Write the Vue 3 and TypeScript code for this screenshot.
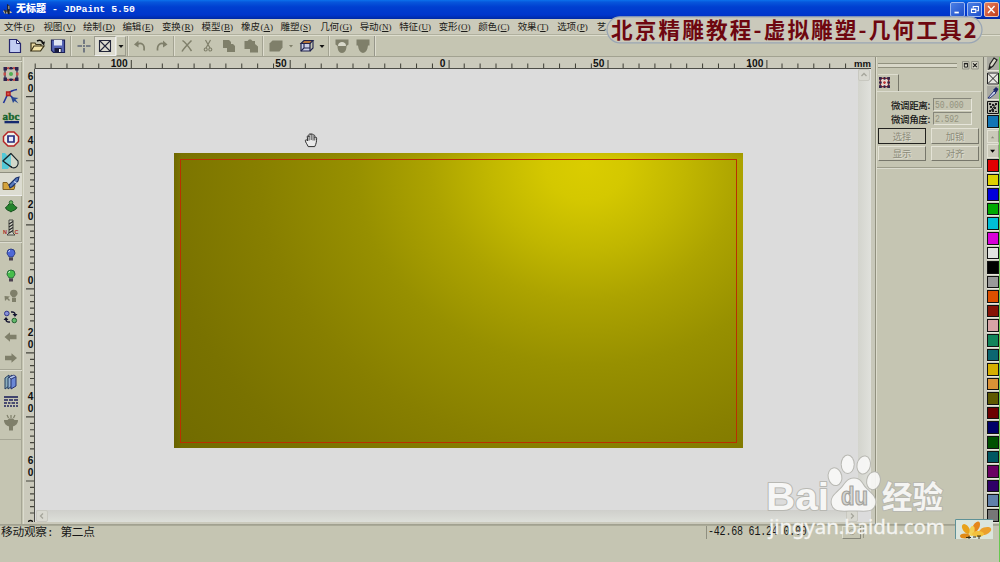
<script setup lang="ts">
interface Shape { d: string; f?: string; s?: string; w?: number }
interface Icon { w?: number; kind?: string; label?: string; shapes: Shape[] }

const G = '#7f7f6a'
const caret: Shape[] = [{ d: 'M-2.5-1h5L0 2z', f: '#111' }]

const menus: [string, string][] = [
  ['文件', 'F'], ['视图', 'V'], ['绘制', 'D'], ['编辑', 'E'], ['变换', 'R'], ['模型', 'B'],
  ['橡皮', 'A'], ['雕塑', 'S'], ['几何', 'G'], ['导动', 'N'], ['特征', 'U'], ['变形', 'O'],
  ['颜色', 'C'], ['效果', 'T'], ['选项', 'P'], ['艺', ''],
]

const toolbar: Icon[] = [
  { w: 22, shapes: [{ d: 'M-5.5-6.5h7l4 4v9h-11z', f: '#c3cdf2', s: '#26276e', w: 1.2 }, { d: 'M1.5-6.5v4h4z', f: '#f2f4ff', s: '#26276e' }] },
  { w: 21, shapes: [{ d: 'M-6 5V-3h4l1 1.5h5V1', f: '#e9d8a0', s: '#3a3217', w: 1.2 }, { d: 'M-6 5l3-5H7L3.500 5z', f: '#f3e3a8', s: '#3a3217', w: 1.2 }, { d: 'M0-5c3-1.500 5-.5 6 2', s: '#111', w: 1.4 }, { d: 'M4-3.500l4-1-1 4z', f: '#111' }] },
  { w: 22, shapes: [{ d: 'M-6.500-6h13V6.500h-11l-2-2z', f: '#5665b5', s: '#1c2058', w: 1.2 }, { d: 'M-4-6h8v5.500h-8z', f: '#dfe5f2' }, { d: 'M-3.500 2h7v4.500h-7z', f: '#191b3d' }, { d: 'M1 3h1.700v3H1z', f: '#fff' }] },
  { kind: 'sep', w: 4, shapes: [] },
  { w: 21, shapes: [{ d: 'M0-6.500V-2M0 2v4.500M-6.500 0H-2M2 0h4.500', s: '#2e3a5c', w: 1.1 }, { d: 'M-.7-.7h1.400v1.400h-1.400z', f: '#2e3a5c' }] },
  { kind: 'pressed', w: 22, shapes: [{ d: 'M-5.500-5.500h11v11h-11zM-5.500-5.500l11 11M5.500-5.500l-11 11', s: '#22263a', w: 1.1 }] },
  { kind: 'raised', w: 10, shapes: caret },
  { kind: 'sep', w: 3, shapes: [] },
  { w: 22, shapes: [{ d: 'M-3-1.500c4-2.500 8-.5 7 6', s: G, w: 1.7 }, { d: 'M-6-1.500l4.500-4v7z', f: G }] },
  { w: 21, shapes: [{ d: 'M3-1.500c-4-2.500-8-.5-7.500 6', s: G, w: 1.7 }, { d: 'M5.500-1.500l-4.500-4v7z', f: G }] },
  { kind: 'sep', w: 4, shapes: [] },
  { w: 21, shapes: [{ d: 'M-4.500-5.500c3 2 6 6 9 10.500M4.500-5.500C1-2-3 2-5 5.500', s: G, w: 1.5 }] },
  { w: 21, shapes: [{ d: 'M-2.500-6L2 2M2.500-6L-2 2', s: G, w: 1.2 }, { d: 'M-3.800 3.500a1.500 1.500 0 1 0 3 0a1.500 1.500 0 1 0-3 0M.8 3.500a1.500 1.500 0 1 0 3 0a1.500 1.500 0 1 0-3 0', s: G, w: 1.1 }] },
  { w: 22, shapes: [{ d: 'M-6-6H0l2 2v2h2l2 2v6h-8V2h-4z', f: G }] },
  { w: 21, shapes: [{ d: 'M-6.500-5h3l1.500-1.500h2L1.500-5H4v3l3 2.500V6.500h-8V3h-5.500z', f: G }] },
  { kind: 'sep', w: 4, shapes: [] },
  { w: 21, shapes: [{ d: 'M-6.500-2.500l3-3h10v7l-3 4h-10z', f: G }] },
  { w: 10, shapes: [{ d: 'M-2-1h4L0 1.500z', f: G }] },
  { w: 21, shapes: [{ d: 'M-6-2.500l3-3H6l-3 3z', f: '#b5743b', s: '#20234e', w: 1.1 }, { d: 'M-6-2.500h9v7.500h-9z', f: '#c9cde6', s: '#20234e', w: 1.2 }, { d: 'M6-5.500V2L3 5M-3-2.500V2L-6 5M-3 2h6', s: '#20234e', w: 1.1 }] },
  { w: 10, shapes: caret },
  { kind: 'sep', w: 4, shapes: [] },
  { w: 21, shapes: [{ d: 'M-6.500-6.500h13v5l-2 1.500c0 4-1.500 7-4.500 7S-4.500 4-4.500 0l-2-1.500z', f: G }, { d: 'M-4 0c0-3 2-4 4-4s4 1 4 4z', f: '#d8d8ca' }] },
  { w: 22, shapes: [{ d: 'M-6.500-6.500h13v6H5C4.500 4 3 6.500 0 7c-3-.5-4.500-3-5-7.500h-1.500z', f: G }] },
  { kind: 'end', w: 3, shapes: [] },
]

const bulb = (c: string, dark: string): Shape[] => [
  { d: 'M-4-2a4 4 0 1 1 8 0c0 2-2 2.500-2 4h-4c0-1.500-2-2-2-4z', f: c, s: dark, w: 0.9 },
  { d: 'M-2 2.500h4v3h-4z', f: '#4b4150' }, { d: 'M-2.500-3.500l1.500-1', s: '#fff', w: 1 },
]

const toolGroups: { cls: string; icons: Icon[] }[] = [
  { cls: 'g1', icons: [
    { shapes: [{ d: 'M-6-5.500H6v11H-6z', s: '#22264f', w: 1.2 }, { d: 'M-7.500-7h3.500v3.500h-3.500zM4-7h3.500v3.500H4zM-7.500 3.500h3.500V7h-3.500zM4 3.500h3.500V7H4zM-1.500-7h3v2.500h-3zM-1.500 4.500h3V7h-3z', f: '#2d2350' }, { d: 'M-7.500-1.500h2.500v3h-2.500zM5-1.500h2.500v3H5zM-3.800-7h2v2.200h-2zM2-7h2v2.200H2zM-3.800 4.800h2V7h-2zM2 4.800h2V7H2z', f: '#c24f4a' }, { d: 'M-2 0a2 2 0 1 0 4 0a2 2 0 1 0-4 0', f: '#51b052' }] },
    { shapes: [{ d: 'M-7.500 7L-3-2.500M-3-2.500C0-5.500 3-6 6-6.500M-3-2.500L2 2', s: '#20339a', w: 1.6 }, { d: 'M-4.500-4h3.500v3.500h-3.500z', f: '#d5594d', s: '#b41d1d', w: 1.3 }, { d: 'M0 1l7.500 1-3 1.500 3 4-4-2.500L2 7z', f: '#294893' }] },
    { label: 'abc', shapes: [{ d: 'M-6.500 4H8V6.300H-6.500z', f: '#15296f' }] },
    { shapes: [{ d: 'M-3-7h6l4.500 4.500v5L3 7h-6l-4.500-4.500v-5z', f: '#edf0e8', s: '#b42325', w: 1.5 }, { d: 'M-3-3h6v6h-6z', f: '#e9ebff', s: '#252b7e', w: 1.7 }] },
    { shapes: [{ d: 'M-9-8h3l7 8-4 8h-6z', f: '#52c8d7' }, { d: 'M-8 0L0-7.500 7 0C8 4 5 8 1 6.500z', f: '#d2d8ca', s: '#182329', w: 1.1 }, { d: 'M-8 0L0-7.500V6z', f: '#6fcdd6' }, { d: 'M-8 0L0-7.500M-8 0L1 6.500', s: '#182329', w: 1.1 }] },
    { kind: 'pressed', shapes: [{ d: 'M-8-1.500h4L-1 3l5-1.500-1 4h-11z', f: '#d5a33b', s: '#805f21' }, { d: 'M-2 1l7-7 3-1-1 4-5.500 5.500L-1 4z', f: '#597bbd', s: '#1d326b', w: 1.1 }, { d: 'M3-2.500l3 2', s: '#cdd9f2', w: 1.2 }] },
    { shapes: [{ d: 'M-5.500 1.500c3-1 2-4 5.500-4.500C3.500-2.500 2.500.5 6 1.500 5 4.500 1 4.500 0 6-1.500 4.500-5 4.500-5.500 1.500z', f: '#24842c', s: '#174f1d' }, { d: 'M-1.800-3.500a1.800 1.800 0 1 1 3.600 0a1.800 1.800 0 1 1-3.600 0', f: '#67b95d', s: '#2b6831' }] },
    { label: 'drill', shapes: [{ d: 'M-2-8h4V5l2 2h-8l2-2z', f: '#d2d3c6', s: '#383a37', w: 0.9 }, { d: 'M-2-4l4-2.500M-2-1l4-2.500M-2 2l4-2.500M-2 5l4-2.500', s: '#252525', w: 1.2 }] },
  ] },
  { cls: 'g2', icons: [
    { shapes: bulb('#4e68d6', '#26367b') },
    { shapes: bulb('#46bd4b', '#236336') },
    { shapes: [{ d: 'M-1-2.500a3.800 3.800 0 1 1 7.600 0c0 2-2.300 2.500-2.300 4h-3c0-1.500-2.300-2-2.300-4zM1 2h4v4H1z', f: G }, { d: 'M-6.500 0l5.500.5-2 1.500 2 2-1 1-2-2L-6 5z', f: G }] },
    { shapes: [{ d: 'M-6.500-3.500a2.300 2.300 0 1 0 4.600 0a2.300 2.300 0 1 0-4.600 0', f: '#8790d8', s: '#30368a' }, { d: 'M1 3.500a2.300 2.300 0 1 0 4.600 0a2.300 2.300 0 1 0-4.600 0', f: '#62b96a', s: '#256032' }, { d: 'M0-5c3-.5 4 1 4 2.500M-1 5c-3 .5-4-1-4-2.500', s: '#151530', w: 1.5 }, { d: 'M1.500-3h5L4 0zM-7.500 3h5L-5 0z', f: '#151530' }] },
    { shapes: [{ d: 'M-6.500 0l5.500-4.800v2.500h6.500v4.600H-1v2.500z', f: G }] },
    { shapes: [{ d: 'M6 0L.5-4.800v2.500H-6v4.600H.5v2.500z', f: G }] },
  ] },
  { cls: 'g3', icons: [
    { shapes: [{ d: 'M-6-4l4-3v11l-4 3z', f: '#8caebb', s: '#233c60' }, { d: 'M-3-4l4-3v11l-4 3z', f: '#96b4d2', s: '#233c60' }, { d: 'M0-3l5-2.500V4L0 7z', f: '#6b88d6', s: '#25306f' }, { d: 'M0-3L-2-5l5-2 2 1.500z', f: '#b7caf0', s: '#25306f', w: 0.8 }] },
    { shapes: [{ d: 'M-7-5H7', s: '#20235c', w: 1.6 }, { d: 'M-7-2h4m1 0h4m1 0h4M-7 1h3m1 0h2.500m1 0H4m1 0h2M-7 4h2m1 0h2m1 0h2m1 0h2m1 0h2', s: '#20235c', w: 1.5 }] },
    { shapes: [{ d: 'M-7-3h3.500L-2-4.500h4L3.500-3H7c0 4-2.500 5.500-5 6.500v4h-4v-4C-4.500 2.500-7 1-7-3z', f: G }, { d: 'M-4-8l1.500 3M0-8v3M4-8L2.500-5', s: G, w: 1.2 }] },
  ] },
]

const majorX = [-1, 0, 1, 2, 3].map((i) => 289.6 + i * 158.9)
const labelsX = ['100', '50', '0', '50', '100']
const minorX = Array.from({ length: 52 }, (_, i) => 35.2 + i * 15.89)
  .filter((x) => x < 848 && majorX.every((m) => Math.abs(m - x) > 3) && Math.abs(x - 114.6) > 2)
const majorY = [0, 1, 2, 3, 4, 5, 6].map((i) => 96.7 + i * 64.05)
const labelsY = ['60', '40', '20', '0', '20', '40', '60']
const minorY = majorY.flatMap((m, i) =>
  Array.from({ length: i === 2 ? 7 : 5 }, (_, k) => m + (k + 1) * 6.4))

const colors = [
  '#e00000', '#ddd000', '#0000dc', '#00a900', '#00bfd6', '#d800d8', '#e2e4e0', '#000000', '#999999',
  '#dc5000', '#861407', '#d8a4a6', '#12845a', '#0c6670', '#d5ae00', '#da9236', '#5e5900', '#6c0000',
  '#000068', '#005000', '#005762', '#6a0062', '#2f0067', '#6080aa', '#777777',
]
</script>

<template>
  <div class="app">
    <header class="title">
      <svg class="logo" viewBox="0 0 14 16"><path d="M1 9h8l3 2-4 1H3z" fill="#d9c895" /><path d="M6 1l3 2v10H7l-1-3z" fill="#1c1c22" /><path d="M2 7l4 2-2 4" fill="#292a34" /><path d="M8 3v4" stroke="#ded7b8" /></svg>
      <span class="caption"><b>无标题</b> - JDPaint 5.50</span>
      <div class="winbtns">
        <i><svg viewBox="0 0 15 15"><path d="M4 11h5" stroke="#fff" stroke-width="2" /></svg></i>
        <i><svg viewBox="0 0 15 15"><path d="M6 6V4h6v5h-2M4 7h5v4H4zM4 7.500h5" fill="none" stroke="#fff" stroke-width="1.200" /></svg></i>
        <i class="close"><svg viewBox="0 0 15 15"><path d="M3.500 3.500l7.500 8M11 3.500l-7.500 8" stroke="#fff" stroke-width="1.600" /></svg></i>
      </div>
    </header>

    <nav class="menu">
      <span v-for="m in menus" :key="m[0]" class="mi">{{ m[0] }}<em v-if="m[1]">(<u>{{ m[1] }}</u>)</em></span>
    </nav>

    <div class="toolbar">
      <div v-for="(t, i) in toolbar" :key="i" class="tb" :class="t.kind" :style="{ width: t.w + 'px' }">
        <svg v-if="t.shapes.length" viewBox="-10 -10 20 20"><path v-for="(p, k) in t.shapes" :key="k" :d="p.d" :fill="p.f || 'none'" :stroke="p.s || 'none'" :stroke-width="p.w || 1" /></svg>
      </div>
    </div>

    <main class="body">
      <aside class="tools">
        <div v-for="g in toolGroups" :key="g.cls" class="group" :class="g.cls">
          <div v-for="(t, i) in g.icons" :key="i" class="tool" :class="t.kind">
            <svg viewBox="-10 -10 20 20">
              <path v-for="(p, k) in t.shapes" :key="k" :d="p.d" :fill="p.f || 'none'" :stroke="p.s || 'none'" :stroke-width="p.w || 1" />
              <text v-if="t.label === 'abc'" x="-8.500" y="3" textLength="17" class="abc">abc</text>
              <template v-if="t.label === 'drill'"><text x="-8" y="6" class="nc">N</text><text x="3.500" y="6" class="nc">C</text></template>
            </svg>
          </div>
        </div>
      </aside>

      <section class="work">
        <svg class="hruler" viewBox="24 57 851 12">
          <path :d="minorX.map((x) => `M${x} 63.500V68`).join('') + majorX.map((x) => `M${x + 0.6} 60V68`).join('')" stroke="#3c3c34" stroke-width="1" />
          <path d="M34.500 68.500H871" stroke="#4d4d48" />
          <text v-for="(l, i) in labelsX" :key="i" :x="majorX[i] - 3" y="66.800" text-anchor="end" class="num">{{ l }}</text>
          <text x="871" y="66.500" text-anchor="end" class="num mm">mm</text>
        </svg>
        <svg class="vruler" viewBox="24 69 11 455">
          <path :d="minorY.map((y) => `M30 ${y}H34`).join('') + majorY.map((y) => `M26 ${y}H34`).join('')" stroke="#44443c" stroke-width="1.200" />
          <path d="M34.500 69V522" stroke="#4d4d48" />
          <template v-for="(l, i) in labelsY" :key="i">
            <text v-for="(c, k) in l" :key="k" x="27.800" :y="majorY[i] - (l.length - Number(k)) * 12 + 6.900" class="num">{{ c }}</text>
          </template>
          <path d="M28.500 522c0-2 4-2 4 0" fill="none" stroke="#111" stroke-width="1.300" />
        </svg>
        <div class="canvas">
          <div class="sheet"><div class="frame"></div></div>
          <svg class="hand" viewBox="0 0 14 16"><path d="M4 14.500C3 12 1 10 1 8c0-1 1.500-1.200 2.500.5L3 4c0-1.500 1.500-1.500 1.800 0V2.500C5-0 7 .3 7 2c0-1.700 2-1.700 2.200.5C9.500 1.500 11 1.800 11 3.500V5c.5-1 2-.8 2 .5 0 4-.5 6-2 9z" fill="#eaeaea" stroke="#222" stroke-width="1" /><path d="M5 3v5M7.200 2v5.500M9.200 3v5M11 4.500V8" stroke="#333" stroke-width=".9" /></svg>
          <div class="vscroll"><i class="sb"><svg viewBox="0 0 10 10"><path d="M2.500 6L5 3.500 7.500 6" /></svg></i><i class="sb"><svg viewBox="0 0 10 10"><path d="M2.500 4L5 6.500 7.500 4" /></svg></i></div>
          <div class="hscroll"><i class="sb"><svg viewBox="0 0 10 10"><path d="M6 2.500L3.500 5 6 7.500" /></svg></i><i class="sb"><svg viewBox="0 0 10 10"><path d="M4 2.500L6.500 5 4 7.500" /></svg></i></div>
        </div>
      </section>

      <aside class="panel">
        <div class="ptitle"><span class="grip"></span><svg viewBox="0 0 18 9"><path d="M.5.500h7v8h-7zM10.500.500h7v8h-7z" fill="#d8d7c8" stroke="#8a8a7e" /><path d="M2.500 3h3.500v3.500H2.500zM2 2.500h4.500" fill="none" stroke="#111" /><path d="M12 2.500l4 4M16 2.500l-4 4" stroke="#111" stroke-width="1.200" /></svg></div>
        <div class="tabrow"><div class="tab"><svg viewBox="0 0 12 12"><path d="M1.500 1.500h9v9h-9z" fill="#e7d8cf" stroke="#8a2330" stroke-width="1.500" /><path d="M0 0h3v3H0zM9 0h3v3H9zM0 9h3v3H0zM9 9h3v3H9zM5 0h2v3H5zM5 9h2v3H5zM0 5h3v2H0zM9 5h3v2H9z" fill="#352649" /><path d="M4.500 6h3M6 4.500v3" stroke="#bd3434" stroke-width="1.400" /></svg></div></div>
        <div class="form">
          <div class="row"><label>微调距离:</label><span class="field"><span>50.000</span></span></div>
          <div class="row"><label>微调角度:</label><span class="field"><span>2.592</span></span></div>
          <div class="btns"><button class="def">选择</button><button>加锁</button><button>显示</button><button>对齐</button></div>
        </div>
      </aside>

      <aside class="palette">
        <div class="pc icon"><svg viewBox="0 0 12 13"><path d="M2 12l1-5 4-6 3 2-4 6z" fill="#d8d8c8" stroke="#222" stroke-width="1.200" /><path d="M2 12l1-3 1.500 1z" fill="#111" /></svg></div>
        <div class="pc white"><svg viewBox="0 0 12 13"><path d="M.5 1h11v11H.5zM1 1.500l10 10M11 1.500l-10 10" fill="none" stroke="#222" /></svg></div>
        <div class="pc icon"><svg viewBox="0 0 12 13"><path d="M1 12l6-7 2 2-6 5z" fill="#cfd6ee" stroke="#27347c" /><path d="M6 4l3-3 2.500 2-2 3.500z" fill="#1d2868" /></svg></div>
        <div class="pc icon"><svg viewBox="0 0 12 13"><path d="M.5.500h11v12H.5z" fill="#b4b4a8" stroke="#111" /><path d="M2 2h2v2H2zM5 3h2v2H5zM8 2h2v2H8zM3 5h2v2H3zM7 6h2v2H7zM2 9h2v2H2zM5 8h2v3H5zM8 10h2v1H8z" fill="#222" /><path d="M3 11l6-8" stroke="#111" /></svg></div>
        <div class="pc"><i class="sw current"></i></div>
        <div class="pc arrow"><svg viewBox="0 0 12 13"><path d="M3.500 7.500h4L5.500 5z" fill="#888878" /></svg></div>
        <div class="pc arrow"><svg viewBox="0 0 12 13"><path d="M2.500 4.500h6L5.500 8z" fill="#000" /></svg></div>
        <div v-for="(c, i) in colors" :key="i" class="pc"><i class="sw" :style="{ background: c }"></i></div>
      </aside>
    </main>

    <footer class="status">
      <span class="hint">移动观察: 第二点</span>
      <span class="coords"><span>-42.68 61.24 0.00</span></span>
      <span class="slot"><svg viewBox="0 0 18 14"><circle cx="9" cy="6" r="3" fill="none" stroke="#98988a" /></svg></span>
      <span class="slotend"></span>
    </footer>

    <svg class="banner" viewBox="0 0 378 28"><rect x="1" y=".8" width="375" height="26" rx="13" fill="#cac9bb" stroke="#9aa6b4" stroke-width="1.300" /><text x="5" y="21.800" textLength="365.5">北京精雕教程-虚拟雕塑-几何工具2</text></svg>

    <svg class="flower" viewBox="0 0 38 20"><rect width="38" height="20" fill="#dbe5dc" /><path d="M.5 20V.5H38" fill="none" stroke="#5f9297" /><g fill="#e8a11a"><ellipse cx="11" cy="10" rx="3.200" ry="5.500" transform="rotate(-35 11 10)" /><ellipse cx="21" cy="8" rx="3.200" ry="6" transform="rotate(30 21 8)" fill="#e5861a" /><ellipse cx="17" cy="12" rx="2.500" ry="5" transform="rotate(10 17 12)" fill="#f3d054" /><ellipse cx="30" cy="12" rx="6.500" ry="3.600" transform="rotate(-20 30 12)" fill="#eba02c" /><ellipse cx="10" cy="17" rx="5" ry="2.500" fill="#e08a18" /><ellipse cx="23" cy="15" rx="6" ry="3" fill="#f3c13c" /></g><path d="M11 18.500h5m-2-1.500v3m4-2h3m1-1h4m-2 0v3" fill="none" stroke="#383019" /></svg>

    <svg class="mark" viewBox="760 450 200 95">
      <g class="shade">
        <text x="766" y="510" textLength="63" lengthAdjust="spacingAndGlyphs" class="bai">Bai</text>
        <ellipse cx="835" cy="476.700" rx="6.300" ry="8.400" transform="rotate(-12 835 476.700)" /><ellipse cx="847.700" cy="464.300" rx="6" ry="8.700" /><ellipse cx="863.700" cy="465" rx="6.200" ry="8.600" transform="rotate(12 863.700 465)" /><ellipse cx="873.500" cy="480.700" rx="6.300" ry="8.600" transform="rotate(12 873.500 480.700)" />
        <path d="M854 478.500c7 0 8 6 12 10 5 5 11 9 9 16-2 8-11 6-21 6s-20 2-22-6c-2-7 4-11 9-16 4-4 6-10 13-10z" />
        <text x="882" y="507.500" textLength="61" class="jy">经验</text>
      </g>
      <text x="841" y="505" textLength="27" lengthAdjust="spacingAndGlyphs" class="du">du</text>
      <text x="769" y="534" textLength="176" class="url">jingyan.baidu.com</text>
    </svg>
    <div class="edge"></div>
  </div>
</template>

<style>
html, body { margin: 0; overflow: hidden; background: #c5c5b2; }
</style>

<style scoped>
* { box-sizing: border-box; }
.app { position: relative; width: 1000px; height: 562px; overflow: hidden; background: #c5c5b2; color: #151515; font-family: "Liberation Sans", "Noto Sans CJK SC", sans-serif; display: flex; flex-direction: column; }
svg { display: block; }
.title { height: 19px; flex: none; display: flex; align-items: center; background: linear-gradient(#0c72ec 0, #0757dc 2px, #003fd0 7px, #0036cc 15px, #0029a4 19px); color: #fff; padding-left: 2px; }
.logo { width: 12px; height: 14px; margin-right: 2px; }
.caption { font: bold 9.9px "Liberation Mono", "Noto Sans CJK SC", monospace; white-space: pre; line-height: 18px; flex: 1; }
.caption b { font-size: 10px; }
.winbtns { display: flex; gap: 2px; padding-right: 1px; }
.winbtns i { width: 15px; height: 15px; border: 1px solid #9fb8f0; border-radius: 2px; background: linear-gradient(135deg, #4b7fe5, #1e4fc9); }
.winbtns .close { background: linear-gradient(135deg, #e4805f, #c43d1a); border-color: #e8c2b4; }
.winbtns svg { width: 13px; height: 13px; }
.menu { height: 15.5px; flex: none; display: flex; padding-left: 4px; background: #cbcaba; border-bottom: 1px solid #b0b09e; }
.mi { width: 39.53px; flex: none; white-space: nowrap; font: 9.5px/15px "Noto Sans CJK SC", sans-serif; color: #1b1b18; letter-spacing: -.2px; }
.mi:last-child { width: 9px; }
.mi em { font: 9px "Liberation Serif", serif; font-style: normal; margin-left: .8px; letter-spacing: 0; }
.mi u { text-decoration-thickness: .6px; text-underline-offset: 1px; }
.toolbar { height: 22.5px; flex: none; display: flex; align-items: stretch; padding-left: 4px; border-top: 1px solid #dedecf; border-bottom: 1px solid #a2a291; }
.tb { flex: none; display: flex; align-items: center; justify-content: center; }
.tb svg, .tool svg { width: 20px; height: 20px; flex: none; overflow: visible; }
.sep { background: linear-gradient(90deg, transparent 1px, #a3a392 1px, #a3a392 2px, #deddcf 2px, #deddcf 3px, transparent 3px); }
.end { border-left: 1px solid #96968a; box-shadow: inset 1px 0 #deddcf; }
.tb.pressed { background: #dddcd0; border: 1px solid #9b9b8c; border-right-color: #eee; border-bottom-color: #eee; }
.tb.raised { border: 1px solid #dfdfd2; border-right-color: #9b9b8c; border-bottom-color: #9b9b8c; }
.body { height: 467px; flex: none; display: grid; grid-template-columns: 24px 851px 109px 15px; }
.tools { display: flex; flex-direction: column; padding-top: 3px; border-right: 1px solid #dcdccf; background: linear-gradient(90deg, transparent 21px, #a6a695 21px, #a6a695 22px, transparent 22px); }
.group { border-top: 1px solid #a6a695; box-shadow: inset 0 1px #dcdccf; width: 22px; display: grid; padding-top: 2px; }
.g1 { height: 181px; padding-bottom: 2px; }
.g2 { height: 128px; padding-top: 3px; padding-bottom: 1px; }
.g3 { height: 71px; padding-bottom: 6px; border-bottom: 1px solid #a6a695; }
.tool { display: flex; align-items: center; justify-content: center; }
.tool.pressed { background: #dcdcd1; border-top: 1px solid #8f8f80; border-bottom: 1px solid #eee; }
.abc { font: bold 11px "Liberation Serif", serif; fill: #14642c; stroke: #14642c; stroke-width: .4; }
.nc { font: bold 5.5px "Liberation Sans", sans-serif; fill: #a8302b; }
.work { display: grid; grid-template: 12px 455px / 11px 840px; background: #cbcabc; }
.hruler { grid-column: 1 / 3; width: 851px; height: 12px; }
.vruler { width: 11px; height: 455px; }
.num { font: bold 10.2px "Liberation Sans", sans-serif; fill: #111; }
.mm { font-size: 9.5px; }
.canvas { position: relative; background: #dcdcdc; border-right: 4px solid #c8c8ba; height: 453px; }
.sheet { position: absolute; left: 139px; top: 84px; width: 569px; height: 295px; padding: 6px 6px 5px 6px; background: linear-gradient(90deg, rgba(70, 65, 0, .22) 0, transparent 7px), linear-gradient(rgba(80, 75, 0, .1) 0, transparent 7px), radial-gradient(575px 500px at 412px 12px, #dacd00 0, #d4c800 7%, #c1b700 17%, #aca300 27%, #979000 40%, #877f00 57%, #797200 75%, #6c6700 100%); }
.frame { height: 100%; border: 1px solid #ba3000; }
.hand { position: absolute; left: 269px; top: 64px; width: 14px; height: 15px; }
.vscroll, .hscroll { position: absolute; display: flex; justify-content: space-between; }
.vscroll { right: 0; top: 0; width: 13px; height: 440px; flex-direction: column; background: linear-gradient(90deg, #d3d4cd, #e0e1dc); }
.hscroll { left: 1px; bottom: 0; width: 822px; height: 12px; background: linear-gradient(#cfcfcb, #dddfd9); }
.sb { width: 12px; height: 12px; background: #d8d8d0; border: 1px solid #c8c8c0; border-radius: 2px; }
.sb svg { width: 10px; height: 10px; }
.sb path { fill: none; stroke: #a5a59b; stroke-width: 1.3; }
.panel { border-left: 1px solid #91917f; box-shadow: inset 1px 0 #dddccd; border-right: 1px solid #7c7c70; }
.ptitle { display: flex; align-items: center; padding: 4px 4px 0 2px; gap: 5px; height: 13px; }
.grip { width: 81px; height: 5px; border-top: 1px solid #91917f; border-bottom: 1px solid #91917f; background: #d8d7c8; }
.ptitle svg { width: 17px; height: 8.5px; }
.tabrow { height: 21px; padding: 4px 5px 0 2px; }
.tab { width: 21px; height: 18px; border-right: 1px solid #77776a; border-top: 1px solid #dedecf; padding: 2px 0 0 1px; }
.tab svg { width: 11px; height: 11px; }
.form { margin: 0 1px 0 1px; height: 77px; padding-top: 6px; border-top: 1px solid #dcdccf; border-right: 1px solid #8f8f80; border-bottom: 1px solid #9d9d8b; box-shadow: 0 1px #dcdccf; }
.row { display: flex; height: 14px; padding-left: 14px; }
label { width: 42px; font: 9.5px/14px "Noto Sans CJK SC", sans-serif; letter-spacing: -.4px; white-space: nowrap; font-weight: 500; }
.field { width: 39px; height: 12.5px; font: 8.1px/11px "Liberation Mono", monospace; letter-spacing: -.1px; color: #93937f; border: 1px solid #86867a; border-right-color: #e6e5da; border-bottom-color: #e6e5da; padding-left: 1px; }
.field span { display: block; transform: scaleY(1.25); }
.btns { display: grid; grid-template-columns: 48px 48px; grid-auto-rows: 15.5px; gap: 2px 5px; padding: 2px 0 0 1px; }
.btns button { margin: 0; padding: 0; border: 1px solid #e4e3d6; border-right-color: #77776b; border-bottom-color: #77776b; background: #c9c8b7; color: #8c8c7a; text-shadow: 1px 1px #dddccf; font: 9.3px/12px "Noto Sans CJK SC", sans-serif; }
.btns .def { border: 1.5px solid #22221f; }
.palette { display: grid; grid-template-rows: repeat(32, 14.59px); padding-left: 3px; background: #c8c8ba; overflow: hidden; }
.pc { width: 12px; height: 13.6px; border-bottom: 1px solid #e5e4da; display: flex; }
.pc svg { width: 12px; height: 13px; }
.icon { background: #aaaaa1; }
.white { background: #e5e5df; }
.arrow { background: #cac9b9; border: 1px solid #e2e1d4; border-right-color: #99998a; }
.sw { width: 12px; height: 12.6px; border: 1px solid #111; }
.current { background: #1275b4; }
.status { flex: 1; border-top: 1px solid #a1a190; box-shadow: inset 0 1px #aaaa98; display: flex; align-items: flex-start; padding: 1px 0 0 1px; }
.hint { width: 705px; flex: none; font: 11.7px/14px "Liberation Mono", "Noto Sans CJK SC", monospace; letter-spacing: -.23px; white-space: nowrap; }
.coords { width: 136px; flex: none; height: 13px; font: 10px/14px "Liberation Mono", monospace; letter-spacing: -.2px; padding-left: 1px; border-left: 1px solid #8f8f80; white-space: nowrap; }
.coords span { display: block; transform: scaleY(1.22); }
.slot { width: 19px; height: 13px; border: 1px solid #dedecf; border-right-color: #88887b; border-bottom-color: #88887b; }
.slot svg { width: 18px; height: 12px; }
.slotend { width: 3px; height: 12px; border-right: 1px solid #999988; }
.banner { position: absolute; left: 606px; top: 15.5px; width: 378px; height: 28px; }
.banner text { font: bold 21.6px "Noto Sans CJK SC", sans-serif; fill: #6e0710; }
.flower { position: absolute; left: 955px; top: 519px; width: 38px; height: 20px; }
.mark { position: absolute; left: 760px; top: 450px; width: 200px; height: 95px; }
.shade { fill: #f8f8f7; stroke: #b6b6b0; stroke-width: 2; paint-order: stroke; opacity: .93; stroke-linejoin: round; }
.bai { font: bold 39px "Liberation Sans", sans-serif; }
.jy { font: bold 30.5px "Noto Sans CJK SC", sans-serif; }
.du { font: bold 25px "Liberation Sans", sans-serif; fill: #d6d6d2; stroke: #a2a29d; stroke-width: 1.2; }
.url { font: 20.5px "Noto Sans", sans-serif; fill: #f4f4f1; stroke: #f4f4f1; stroke-width: .3; }
.edge { position: absolute; right: 0; top: 57px; width: 1px; height: 505px; background: #68c850; }
</style>
